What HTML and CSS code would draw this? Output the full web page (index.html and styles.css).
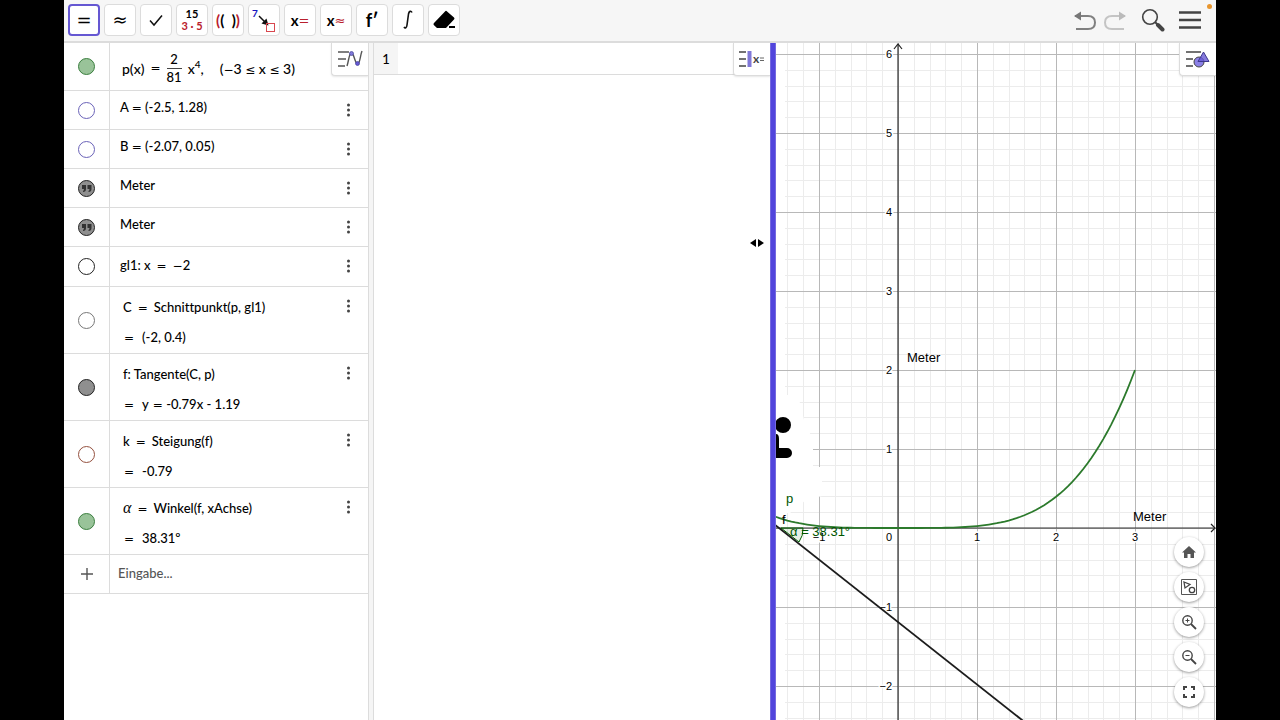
FILE: index.html
```
<!DOCTYPE html>
<html lang="de">

<head>
    <meta charset="utf-8">
    <meta name="viewport" content="width=device-width, initial-scale=1.0">
    <title>GeoGebra Classic</title>
    <link rel="stylesheet" href="styles.css">
</head>

<body>
    <div class="app">
        <header class="toolbar">
            <div class="tools">
                <button class="tool active" aria-label="Berechne"><i class="eq">=</i></button>
                <button class="tool" aria-label="Numerisch"><i class="eq">≈</i></button>
                <button class="tool" aria-label="Eingabe beibehalten">
                    <svg width="16" height="14" viewBox="0 0 16 14"><path d="M2 7.500 6 12 14 2.500" fill="none" stroke="#111" stroke-width="1.500" /></svg>
                </button>
                <button class="tool factor" aria-label="Faktorisiere"><span>15</span><span class="red">3 · 5</span></button>
                <button class="tool expand" aria-label="Multipliziere"><span class="red">(</span>(&nbsp; )<span class="red">)</span></button>
                <button class="tool" aria-label="Ersetze">
                    <svg width="26" height="26" viewBox="0 0 26 26">
                        <text x="1" y="10" font-size="10" font-weight="bold" fill="#1515c0">7</text>
                        <path d="M8 9 15 16" stroke="#111" stroke-width="1.500" />
                        <path d="M17.500 18.500 10.500 16.500 15.500 11.500z" fill="#111" />
                        <rect x="15.500" y="16.500" width="8" height="8" fill="none" stroke="#d8474f" />
                    </svg>
                </button>
                <button class="tool solve" aria-label="Löse">x<i class="eq red">=</i></button>
                <button class="tool solve" aria-label="Löse numerisch">x<i class="eq red">≈</i></button>
                <button class="tool deriv" aria-label="Ableitung">f′</button>
                <button class="tool" aria-label="Integral">
                    <svg width="14" height="22" viewBox="0 0 14 22"><path d="M11 3.500C10 1.500 8 2 7.500 5L6 16C5.700 19 4 19.500 3 18" fill="none" stroke="#111" stroke-width="1.600" /></svg>
                </button>
                <button class="tool" aria-label="Lösche">
                    <svg width="24" height="22" viewBox="0 0 24 22"><path d="M14.500 2 22 8.500Q23 9.500 22 10.500L14 19H5L1.800 16Q1 15 2 14L13 2.500Q13.800 1.500 14.500 2z" fill="#000" /><path d="M17 18H23" stroke="#000" stroke-width="2" /></svg>
                </button>
            </div>
            <div class="actions">
                <button class="action" aria-label="Rückgängig">
                    <svg width="24" height="22" viewBox="0 0 24 22"><path d="M2 7H15Q22 7 22 13.500T15 20H3" fill="none" stroke="#808080" stroke-width="2" /><path d="M1 7 8 2.500V11.500z" fill="#777" /></svg>
                </button>
                <button class="action" aria-label="Wiederherstellen">
                    <svg width="24" height="22" viewBox="0 0 24 22"><path d="M22 7H9Q2 7 2 13.500T9 20H21" fill="none" stroke="#c4c4c4" stroke-width="2" /><path d="M23 7 16 2.500V11.500z" fill="#bbb" /></svg>
                </button>
                <button class="action search" aria-label="Suche">
                    <svg width="24" height="24" viewBox="0 0 24 24"><circle cx="9" cy="9" r="7.300" fill="none" stroke="#444" stroke-width="1.600" /><path d="M14 14 17 17" stroke="#444" stroke-width="2" /><path d="M17 17 21.500 21.500" stroke="#444" stroke-width="4" stroke-linecap="round" /></svg>
                </button>
                <button class="action menu" aria-label="Menü">
                    <svg width="22" height="20" viewBox="0 0 22 20"><path d="M0 2.500H22M0 10H22M0 17.500H22" stroke="#444" stroke-width="2.400" /></svg>
                </button>
            </div>
        </header>

        <main class="views">
            <section class="algebra">
                <button class="stylebar" aria-label="Stilleiste Algebra">
                    <svg width="28" height="22" viewBox="0 0 28 22"><path d="M2 4H13M2 11H10M2 18H9" stroke="#555" stroke-width="1.500" /><path d="M11 18C13 12 13 5 15.500 5S19 16 21.500 16 24 8 26 3" fill="none" stroke="#555" stroke-width="1.400" /><circle cx="15.500" cy="5.500" r="2" fill="#8078d8" stroke="#444499" stroke-width=".7" /><circle cx="21.500" cy="15.500" r="2" fill="#6557d2" stroke="#444499" stroke-width=".7" /></svg>
                </button>
                <ul class="rows">
                    <li class="row first">
                        <div class="side"><button class="marble green" aria-label="p anzeigen"></button></div>
                        <div class="formula">p(x)<i class="eq wide">=</i><span class="frac"><span>2</span><span>81</span></span><span class="power">x<sup>4</sup>,</span><span>(<i class="eq">−</i>3 <i class="eq">≤</i> x <i class="eq">≤</i> 3)</span></div>
                    </li>
                    <li class="row">
                        <div class="side"><button class="marble blue" aria-label="A anzeigen"></button></div>
                        <div class="text">A <i class="eq">=</i> (-2.5, 1.28)</div>
                        <button class="more" aria-label="Mehr"><svg width="5" height="16" viewBox="0 0 5 16"><path d="M2.500 3h0M2.500 8h0M2.500 13h0" /></svg></button>
                    </li>
                    <li class="row">
                        <div class="side"><button class="marble blue" aria-label="B anzeigen"></button></div>
                        <div class="text">B <i class="eq">=</i> (-2.07, 0.05)</div>
                        <button class="more" aria-label="Mehr"><svg width="5" height="16" viewBox="0 0 5 16"><path d="M2.500 3h0M2.500 8h0M2.500 13h0" /></svg></button>
                    </li>
                    <li class="row">
                        <div class="side"><button class="marble gray" aria-label="Text anzeigen"><svg width="13" height="13" viewBox="0 0 13 13"><path d="M2 3H6V7Q6 10 3 10V9Q4 8.500 4 7H2zM7.500 3H11.500V7Q11.500 10 8.500 10V9Q9.500 8.500 9.500 7H7.500z" fill="#333" /></svg></button></div>
                        <div class="text">Meter</div>
                        <button class="more" aria-label="Mehr"><svg width="5" height="16" viewBox="0 0 5 16"><path d="M2.500 3h0M2.500 8h0M2.500 13h0" /></svg></button>
                    </li>
                    <li class="row">
                        <div class="side"><button class="marble gray" aria-label="Text anzeigen"><svg width="13" height="13" viewBox="0 0 13 13"><path d="M2 3H6V7Q6 10 3 10V9Q4 8.500 4 7H2zM7.500 3H11.500V7Q11.500 10 8.500 10V9Q9.500 8.500 9.500 7H7.500z" fill="#333" /></svg></button></div>
                        <div class="text">Meter</div>
                        <button class="more" aria-label="Mehr"><svg width="5" height="16" viewBox="0 0 5 16"><path d="M2.500 3h0M2.500 8h0M2.500 13h0" /></svg></button>
                    </li>
                    <li class="row equation">
                        <div class="side"><button class="marble" aria-label="gl1 anzeigen"></button></div>
                        <div class="text">gl1: x<i class="eq wide">=</i><i class="eq">−</i>2</div>
                        <button class="more" aria-label="Mehr"><svg width="5" height="16" viewBox="0 0 5 16"><path d="M2.500 3h0M2.500 8h0M2.500 13h0" /></svg></button>
                    </li>
                    <li class="row double">
                        <div class="side"><button class="marble light" aria-label="C anzeigen"></button></div>
                        <div class="text"><div>C<i class="eq wide">=</i>Schnittpunkt(p, gl1)</div><div class="result"><i class="eq">=</i>(-2, 0.4)</div></div>
                        <button class="more" aria-label="Mehr"><svg width="5" height="16" viewBox="0 0 5 16"><path d="M2.500 3h0M2.500 8h0M2.500 13h0" /></svg></button>
                    </li>
                    <li class="row double">
                        <div class="side"><button class="marble gray" aria-label="f anzeigen"></button></div>
                        <div class="text"><div>f: Tangente(C, p)</div><div class="result"><i class="eq">=</i>y <i class="eq">=</i> -0.79x - 1.19</div></div>
                        <button class="more" aria-label="Mehr"><svg width="5" height="16" viewBox="0 0 5 16"><path d="M2.500 3h0M2.500 8h0M2.500 13h0" /></svg></button>
                    </li>
                    <li class="row double">
                        <div class="side"><button class="marble brown" aria-label="k anzeigen"></button></div>
                        <div class="text"><div>k<i class="eq wide">=</i>Steigung(f)</div><div class="result"><i class="eq">=</i>-0.79</div></div>
                        <button class="more" aria-label="Mehr"><svg width="5" height="16" viewBox="0 0 5 16"><path d="M2.500 3h0M2.500 8h0M2.500 13h0" /></svg></button>
                    </li>
                    <li class="row double">
                        <div class="side"><button class="marble green" aria-label="α anzeigen"></button></div>
                        <div class="text"><div><span class="greek">α</span><i class="eq wide">=</i>Winkel(f, xAchse)</div><div class="result"><i class="eq">=</i>38.31º</div></div>
                        <button class="more" aria-label="Mehr"><svg width="5" height="16" viewBox="0 0 5 16"><path d="M2.500 3h0M2.500 8h0M2.500 13h0" /></svg></button>
                    </li>
                    <li class="row">
                        <label class="side" for="eingabe"><svg width="12" height="12" viewBox="0 0 12 12"><path d="M6 0V12M0 6H12" stroke="#555" stroke-width="1.400" /></svg></label>
                        <input class="entry" id="eingabe" type="text" placeholder="Eingabe..." aria-label="Eingabe">
                    </li>
                </ul>
            </section>

            <div class="splitter"></div>

            <section class="cas">
                <div class="cas-row">
                    <label class="cas-number" for="cas1">1</label>
                    <input class="cas-input" id="cas1" type="text">
                </div>
                <button class="stylebar" aria-label="Stilleiste CAS">
                    <svg width="28" height="22" viewBox="0 0 28 22"><path d="M1 4H8M1 11H8M1 18H8" stroke="#444" stroke-width="1.500" /><rect x="9.500" y="3" width="4" height="16" fill="#8078d8" /><text x="15" y="15" font-size="12" font-weight="bold" fill="#444">x</text><path d="M22 10H26M22 12.500H26" stroke="#666" /></svg>
                </button>
                <svg class="cursor" width="16" height="8" viewBox="0 0 16 8"><path d="M1 4 7 0V8zM15 4 9 0V8z" fill="#000" /></svg>
            </section>

            <div class="splitter dragging"></div>

            <section class="graphics">
                <svg class="plot" viewBox="0 0 440 677" preserveAspectRatio="xMinYMin slice">
                    <g id="grid"></g>
                    <path d="M0 352H22L28 377 37 397V424H46V453L30 457 14 470H0z" fill="#fff" />
                    <circle cx="7" cy="382" r="8" />
                    <path d="M0 391Q3 391 3 396V405H11A5 5 0 0 1 11 415H0z" />
                    <path d="M0 485H438M122 677V2" stroke="#333" stroke-width="1.200" />
                    <path d="M435 481 439 485 435 489M118 6 122 1 126 6" fill="none" stroke="#222" stroke-width="1.200" />
                    <g id="numbers"></g>
                    <path d="M5 485H27A22 22 0 0 1 23 499z" fill="#006400" fill-opacity=".1" stroke="#006400" />
                    <path id="curve" fill="none" stroke="#2c7a2c" stroke-width="1.800" />
                    <path id="tangent" fill="none" stroke="#1c1c1c" stroke-width="1.800" />
                    <g class="labels">
                        <text x="131" y="319">Meter</text>
                        <text x="357" y="478">Meter</text>
                        <text x="6" y="481">f</text>
                        <text class="dark-green" x="10" y="460">p</text>
                        <text class="dark-green" x="14" y="493">α = 38.31°</text>
                    </g>
                </svg>
                <button class="stylebar" aria-label="Stilleiste Grafik">
                    <svg width="28" height="22" viewBox="0 0 28 22"><path d="M2 4H17M2 11H9M2 18H9" stroke="#444" stroke-width="1.500" /><circle cx="15" cy="14" r="5" fill="#8b80e6" stroke="#444" /><path d="M19.500 4 25 13.500H14z" fill="#6557d2" fill-opacity=".8" stroke="#3d378f" /></svg>
                </button>
                <div class="zoom-panel">
                    <button class="round" aria-label="Standardansicht"><svg width="14" height="14" viewBox="0 0 14 14"><path d="M7 1 14 7.500H12V13H8.500V9H5.500V13H2V7.500H0z" fill="#555" /></svg></button>
                    <button class="round" aria-label="Alles anzeigen"><svg width="18" height="18" viewBox="0 0 18 18"><path d="M1.500 1.500H16.500V16.500H1.500z" fill="none" stroke="#555" /><path d="M4 4 10 6.500 5 10z" fill="none" stroke="#444" stroke-width="1.300" /><circle cx="12" cy="12" r="2.700" fill="none" stroke="#444" stroke-width="1.300" /></svg></button>
                    <button class="round" aria-label="Vergrößern"><svg width="16" height="16" viewBox="0 0 16 16"><circle cx="6.500" cy="6.500" r="4.700" fill="none" stroke="#444" stroke-width="1.400" /><path d="M10 10 15 15" stroke="#444" stroke-width="1.800" /><path d="M6.500 4.500V8.500M4.500 6.500H8.500" stroke="#444" /></svg></button>
                    <button class="round" aria-label="Verkleinern"><svg width="16" height="16" viewBox="0 0 16 16"><circle cx="6.500" cy="6.500" r="4.700" fill="none" stroke="#444" stroke-width="1.400" /><path d="M10 10 15 15" stroke="#444" stroke-width="1.800" /><path d="M4.500 6.500H8.500" stroke="#444" /></svg></button>
                    <button class="round" aria-label="Vollbild"><svg width="14" height="14" viewBox="0 0 14 14"><path d="M2 5V2H5M9 2H12V5M12 9V12H9M5 12H2V9" fill="none" stroke="#444" stroke-width="2" /></svg></button>
                </div>
            </section>
        </main>
        <span class="rec-dot"></span>
    </div>

    <script src="plot.js"></script>
</body>

</html>
```

FILE: styles.css
```
* {
    box-sizing: border-box;
}

body {
    margin: 0;
    background: #000;
    color: #000;
    font-family: Lato, "Liberation Sans", sans-serif;
    font-size: 13px;
    font-weight: 500;
    font-variant-ligatures: none;
}

button {
    border: none;
    padding: 0;
    background: none;
    color: inherit;
    font-family: inherit;
    cursor: pointer;
}

svg {
    display: block;
}

.app {
    position: relative;
    display: flex;
    flex-direction: column;
    height: 100vh;
    margin: 0 5%;
    background: #fff;
}

/* Werkzeugleiste */
.toolbar {
    display: flex;
    justify-content: space-between;
    align-items: center;
    flex: none;
    height: 43px;
    padding: 0 15px 1px 4px;
    background: #f6f6f6;
    border-bottom: 2px solid #dcdcdc;
}

.tools {
    display: flex;
    gap: 4px;
}

.tool {
    display: flex;
    justify-content: center;
    align-items: center;
    width: 32px;
    height: 32px;
    border: 1px solid #dcdcdc;
    border-radius: 4px;
    background: #fff;
    font-size: 18px;
    line-height: 20px;
}

.tool.active {
    border: 2px solid #6557d2;
}

.factor {
    flex-direction: column;
    font-size: 11px;
    line-height: 12px;
    font-weight: bold;
}

.expand,
.solve {
    font-size: 15px;
    font-weight: bold;
}

.solve .eq {
    font-size: 13px;
    font-weight: normal;
}

.deriv {
    font-size: 18px;
    font-weight: bold;
}

.red {
    color: #b9202c;
}

.actions {
    display: flex;
    align-items: center;
    gap: 6px;
}

.search {
    margin-left: 8px;
}

.menu {
    margin-left: 8px;
}

/* Ansichten */
.views {
    display: grid;
    grid-template-columns: 304fr 6px 396fr 6px 440fr;
    flex: 1;
    min-height: 0;
}

.algebra,
.cas,
.graphics {
    position: relative;
    min-width: 0;
    min-height: 0;
    overflow: hidden;
}

.splitter {
    background: #f5f5f5;
    border-left: 1px solid #dcdcdc;
    border-right: 1px solid #dcdcdc;
}

.splitter.dragging {
    background: #5145dc;
    border-color: #7469e0;
}

.stylebar {
    position: absolute;
    top: 0;
    right: 0;
    display: flex;
    justify-content: center;
    align-items: center;
    width: 37px;
    height: 33px;
    background: #fff;
    border: 1px solid #dcdcdc;
    border-width: 0 0 1px 1px;
    border-radius: 0 0 0 4px;
    box-shadow: 0 1px 2px rgba(0, 0, 0, 0.1);
}

.rows {
    margin: 0;
    padding: 0;
    list-style: none;
}

.row {
    display: flex;
    height: 39px;
    border-bottom: 1px solid #dcdcdc;
}

.first {
    height: 48px;
}

.equation {
    height: 40px;
}

.double {
    height: 67px;
}

.side {
    display: flex;
    justify-content: center;
    align-items: center;
    flex: none;
    width: 46px;
    border-right: 1px solid #dcdcdc;
}

.marble {
    display: flex;
    justify-content: center;
    align-items: center;
    width: 17px;
    height: 17px;
    border: 1px solid #222;
    border-radius: 50%;
    background: #fff;
}

.marble.green {
    border-color: #3b7f3f;
    background: #99c399;
}

.marble.blue {
    border-color: #6a62b8;
}

.marble.gray {
    background: #8f8f8f;
}

.marble.light {
    border-color: #777;
}

.marble.brown {
    border-color: #94503e;
}

.text {
    flex: 1;
    padding-left: 10px;
    line-height: 33px;
    white-space: nowrap;
}

.equation .text {
    line-height: 36px;
}

.double .text {
    padding: 5px 0 0 13px;
    line-height: 30px;
}

/* math signs are wider than in the text font */
.eq {
    font-family: "DejaVu Sans", sans-serif;
    font-style: normal;
    line-height: 1;
}

.text .eq,
.formula .eq {
    font-size: 12px;
}

.eq.wide {
    margin: 0 6px;
}

.result .eq {
    margin-left: 1px;
}

.result .eq:first-child {
    margin-right: 8px;
}

.greek {
    font-family: "Liberation Serif", serif;
    font-style: italic;
    font-size: 16px;
    line-height: 1;
}

.formula {
    display: flex;
    align-items: center;
    padding: 3px 0 0 12px;
    font-size: 14px;
    white-space: nowrap;
}

.frac {
    display: flex;
    flex-direction: column;
    text-align: center;
    font-size: 13px;
    line-height: 17px;
}

.frac span:first-child {
    border-bottom: 1px solid #444;
}

.power {
    margin: 0 16px 0 6px;
}

.power sup {
    font-size: 10px;
    line-height: 0;
}

.more {
    display: flex;
    justify-content: center;
    align-items: center;
    align-self: flex-start;
    width: 40px;
    height: 38px;
}

.more path {
    stroke: #444;
    stroke-width: 3px;
    stroke-linecap: round;
}

.entry,
.cas-input {
    flex: 1;
    min-width: 0;
    border: none;
    outline: none;
    background: none;
    font: inherit;
}

.entry {
    padding: 0 8px 2px;
}

.entry::placeholder {
    color: #555;
    opacity: 1;
}

/* CAS */
.cas-row {
    display: flex;
    height: 32px;
    border-bottom: 1px solid #dcdcdc;
}

.cas-number {
    width: 24px;
    background: #f5f5f5;
    text-align: center;
    line-height: 32px;
}

.cursor {
    position: absolute;
    right: 5px;
    top: 196px;
}

/* Grafik */
.plot {
    width: 100%;
    height: 100%;
    font-family: "Liberation Sans", sans-serif;
}

.minor {
    stroke: #ececec;
}

.major {
    stroke: #b8b8b8;
}

#numbers text {
    font-size: 11px;
    fill: #000;
    stroke: #fff;
    stroke-width: 3px;
    paint-order: stroke;
}

.labels {
    font-size: 13px;
    fill: #000;
}

.dark-green {
    fill: #005500;
}

.zoom-panel {
    position: absolute;
    right: 12px;
    bottom: 13px;
    display: flex;
    flex-direction: column;
    gap: 5px;
}

.round {
    display: flex;
    justify-content: center;
    align-items: center;
    width: 30px;
    height: 30px;
    border-radius: 50%;
    background: #fff;
    box-shadow: 0 1px 3px rgba(0, 0, 0, 0.4);
}

.rec-dot {
    position: absolute;
    top: 4px;
    right: 4px;
    width: 5px;
    height: 5px;
    border-radius: 50%;
    background: #e8962e;
}
```

FILE: plot.js
```
var unit = 79;
var originX = 122;
var originY = 485;
var ns = 'http://www.w3.org/2000/svg';

function px(x) {
    return originX + x * unit;
}

function py(y) {
    return originY - y * unit;
}

function addLine(x1, y1, x2, y2, cls) {
    var el = document.createElementNS(ns, 'path');
    el.setAttribute('d', 'M' + x1 + ' ' + y1 + 'L' + x2 + ' ' + y2);
    el.setAttribute('class', cls);
    document.getElementById('grid').appendChild(el);
}

function addNumber(x, y, value, anchor) {
    var el = document.createElementNS(ns, 'text');
    el.setAttribute('x', x);
    el.setAttribute('y', y);
    el.setAttribute('text-anchor', anchor);
    el.textContent = String(value).replace('-', '−');
    document.getElementById('numbers').appendChild(el);
}

// fine grid first, so the unit lines stay on top
for (var i = -7; i <= 20; i++) {
    if (i % 5) addLine(Math.round(px(i / 5)) + 0.5, 0, Math.round(px(i / 5)) + 0.5, 677, 'minor');
}
for (var j = -12; j <= 30; j++) {
    if (j % 5) addLine(9, Math.round(py(j / 5)) + 0.5, 440, Math.round(py(j / 5)) + 0.5, 'minor');
}
for (var x = -1; x <= 4; x++) addLine(px(x) + 0.5, 0, px(x) + 0.5, 677, 'major');
for (var y = -2; y <= 6; y++) addLine(0, py(y) + 0.5, 440, py(y) + 0.5, 'major');

for (x = -1; x <= 3; x++) {
    if (x) addNumber(px(x), originY + 13, x, 'middle');
}
addNumber(originX - 6, originY + 13, 0, 'end');
for (y = -2; y <= 6; y++) {
    if (y) addNumber(originX - 6, py(y) + 4, y, 'end');
}

// p(x) = 2/81 x^4
var d = '';
for (x = -1.6; x <= 3.001; x += 0.05) {
    d += (d ? 'L' : 'M') + px(x) + ' ' + py(2 / 81 * Math.pow(x, 4));
}
document.getElementById('curve').setAttribute('d', d);

// f: y = -0.79x - 1.19
document.getElementById('tangent').setAttribute('d',
    'M' + px(-2) + ' ' + py(0.39) + 'L' + px(2) + ' ' + py(-2.77));
```
